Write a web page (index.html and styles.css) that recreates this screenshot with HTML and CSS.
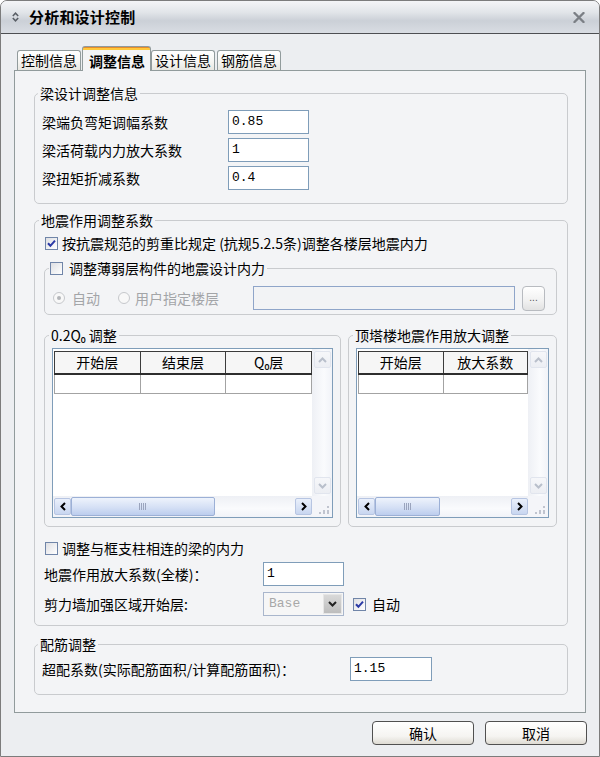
FILE: index.html
```html
<!DOCTYPE html>
<html lang="zh-CN">
<head>
<meta charset="utf-8">
<title>分析和设计控制</title>
<link rel="stylesheet" href="styles.css">
</head>
<body>
<div class="window">
  <header class="titlebar">
    <svg class="app-icon" width="7" height="10" viewBox="0 0 7 10"><path d="M0.8 4 L3.5 1.2 L6.2 4 M0.8 6 L3.5 8.8 L6.2 6" fill="none" stroke="#5a5f66" stroke-width="1.5"/></svg>
    <span class="title">分析和设计控制</span>
    <svg class="close" width="12" height="11" viewBox="0 0 12 11"><path d="M1.5 1 L10.5 10 M10.5 1 L1.5 10" stroke="#7b7f85" stroke-width="2.4" stroke-linecap="round"/></svg>
  </header>
  <main class="client">
    <nav class="tabs">
      <div class="tab t1">控制信息</div>
      <div class="tab active">调整信息</div>
      <div class="tab t3">设计信息</div>
      <div class="tab">钢筋信息</div>
    </nav>
    <section class="panel">
      <fieldset class="group g-beam">
        <legend>梁设计调整信息</legend>
        <div class="beam-grid">
          <span class="lbl">梁端负弯矩调幅系数</span><span class="input">0.85</span>
          <span class="lbl">梁活荷载内力放大系数</span><span class="input">1</span>
          <span class="lbl">梁扭矩折减系数</span><span class="input">0.4</span>
        </div>
      </fieldset>

      <fieldset class="group g-seismic">
        <legend>地震作用调整系数</legend>
        <div class="check-row">
          <span class="checkbox"><svg width="11" height="11" viewBox="0 0 11 11"><path d="M2 5.2 L4.4 7.8 L9 2.6" fill="none" stroke="#2b3aa6" stroke-width="2"/></svg></span>
          <span>按抗震规范的剪重比规定 (抗规5.2.5条)调整各楼层地震内力</span>
        </div>

        <fieldset class="group subgroup">
          <legend><span class="checkbox"></span><span>调整薄弱层构件的地震设计内力</span></legend>
          <div class="radio-row">
            <span class="radio on"></span><span class="dis">自动</span>
            <span class="radio r2"></span><span class="dis">用户指定楼层</span>
            <span class="input disabled wide"></span>
            <span class="dots-btn">...</span>
          </div>
        </fieldset>

        <div class="tables">
          <fieldset class="group tgroup tleft">
            <legend>0.2Q₀ 调整</legend>
            <div class="listview">
              <div class="lv-body">
                <table class="grid">
                  <thead><tr><th>开始层</th><th>结束层</th><th>Q₀层</th></tr></thead>
                  <tbody><tr><td></td><td></td><td></td></tr></tbody>
                </table>
              </div>
              <div class="vscroll">
                <span class="sb-btn dis"><svg width="9" height="6" viewBox="0 0 9 6"><path d="M1 5 L4.5 1.5 L8 5" fill="none" stroke="#b9bfcb" stroke-width="2"/></svg></span>
                <span class="sb-track"></span>
                <span class="sb-btn dis"><svg width="9" height="6" viewBox="0 0 9 6"><path d="M1 1 L4.5 4.5 L8 1" fill="none" stroke="#b9bfcb" stroke-width="2"/></svg></span>
              </div>
              <div class="hscroll">
                <span class="sb-btn"><svg width="6" height="9" viewBox="0 0 6 9"><path d="M5 1 L1.5 4.5 L5 8" fill="none" stroke="#000" stroke-width="2"/></svg></span>
                <span class="sb-thumb thumb-l"><svg width="8" height="7" viewBox="0 0 8 7"><path d="M0.5 0 V7 M2.5 0 V7 M4.5 0 V7 M6.5 0 V7" stroke="#9aa4bd" stroke-width="1"/></svg></span>
                <span class="sb-track"></span>
                <span class="sb-btn"><svg width="6" height="9" viewBox="0 0 6 9"><path d="M1 1 L4.5 4.5 L1 8" fill="none" stroke="#000" stroke-width="2"/></svg></span>
              </div>
              <div class="sizegrip"><svg width="10" height="10" viewBox="0 0 10 10"><path d="M8 2h2v2h-2zM4 6h2v2h-2zM8 6h2v2h-2zM0 8h2v2h-2zM4 8h2v2h-2zM8 8h2v2h-2z" fill="#c0c4cf"/></svg></div>
            </div>
          </fieldset>

          <fieldset class="group tgroup tright">
            <legend>顶塔楼地震作用放大调整</legend>
            <div class="listview">
              <div class="lv-body">
                <table class="grid">
                  <thead><tr><th>开始层</th><th>放大系数</th></tr></thead>
                  <tbody><tr><td></td><td></td></tr></tbody>
                </table>
              </div>
              <div class="vscroll">
                <span class="sb-btn dis"><svg width="9" height="6" viewBox="0 0 9 6"><path d="M1 5 L4.5 1.5 L8 5" fill="none" stroke="#b9bfcb" stroke-width="2"/></svg></span>
                <span class="sb-track"></span>
                <span class="sb-btn dis"><svg width="9" height="6" viewBox="0 0 9 6"><path d="M1 1 L4.5 4.5 L8 1" fill="none" stroke="#b9bfcb" stroke-width="2"/></svg></span>
              </div>
              <div class="hscroll">
                <span class="sb-btn"><svg width="6" height="9" viewBox="0 0 6 9"><path d="M5 1 L1.5 4.5 L5 8" fill="none" stroke="#000" stroke-width="2"/></svg></span>
                <span class="sb-thumb thumb-r"><svg width="8" height="7" viewBox="0 0 8 7"><path d="M0.5 0 V7 M2.5 0 V7 M4.5 0 V7 M6.5 0 V7" stroke="#9aa4bd" stroke-width="1"/></svg></span>
                <span class="sb-track"></span>
                <span class="sb-btn"><svg width="6" height="9" viewBox="0 0 6 9"><path d="M1 1 L4.5 4.5 L1 8" fill="none" stroke="#000" stroke-width="2"/></svg></span>
              </div>
              <div class="sizegrip"><svg width="10" height="10" viewBox="0 0 10 10"><path d="M8 2h2v2h-2zM4 6h2v2h-2zM8 6h2v2h-2zM0 8h2v2h-2zM4 8h2v2h-2zM8 8h2v2h-2z" fill="#c0c4cf"/></svg></div>
            </div>
          </fieldset>
        </div>

        <div class="check-row cr2">
          <span class="checkbox"></span>
          <span>调整与框支柱相连的梁的内力</span>
        </div>
        <div class="field-row fr1">
          <span class="lbl">地震作用放大系数(全楼)：</span>
          <span class="input">1</span>
        </div>
        <div class="field-row fr2">
          <span class="lbl">剪力墙加强区域开始层:</span>
          <span class="combo"><span class="combo-text">Base</span><span class="combo-btn"><svg width="9" height="6" viewBox="0 0 9 6"><path d="M1 1 L4.5 4.5 L8 1" fill="none" stroke="#222" stroke-width="2"/></svg></span></span>
          <span class="checkbox auto"><svg width="11" height="11" viewBox="0 0 11 11"><path d="M2 5.2 L4.4 7.8 L9 2.6" fill="none" stroke="#2b3aa6" stroke-width="2"/></svg></span>
          <span class="auto-lbl">自动</span>
        </div>
      </fieldset>

      <fieldset class="group g-rebar">
        <legend>配筋调整</legend>
        <div class="field-row fr3">
          <span class="lbl">超配系数(实际配筋面积/计算配筋面积)：</span>
          <span class="input">1.15</span>
        </div>
      </fieldset>
    </section>
    <footer class="buttons">
      <span class="btn">确认</span>
      <span class="btn">取消</span>
    </footer>
  </main>
</div>
</body>
</html>
```

FILE: styles.css
```css
* { box-sizing: border-box; }
html, body { margin: 0; padding: 0; }
body {
  width: 600px;
  height: 757px;
  font-family: "Noto Sans CJK SC", "Noto Sans", "DejaVu Sans", sans-serif;
  font-size: 14px;
  line-height: 16px;
  color: #000;
  background: #ffffff;
}

.window {
  width: 600px;
  height: 757px;
  border: 1px solid #7c7c7c;
  border-radius: 7px 7px 0 0;
  background: #eceef1;
  display: flex;
  flex-direction: column;
  overflow: hidden;
}

/* ---------- title bar ---------- */
.titlebar {
  flex: none;
  height: 33px;
  display: flex;
  align-items: center;
  padding: 0 14px 0 11px;
  background: linear-gradient(#f4f5f7 0%, #e2e5e9 35%, #cbd0d7 62%, #d9dde3 100%);
  border-bottom: 1px solid #4d4f52;
}
.app-icon { margin-right: 10px; }
.title {
  font-size: 15px;
  font-weight: bold;
  letter-spacing: 0.2px;
  color: #000;
}
.close { margin-left: auto; }

/* ---------- client ---------- */
.client {
  flex: 1;
  display: flex;
  flex-direction: column;
  padding: 12px 13px 0 13px;
}

.tabs {
  height: 25px;
  display: flex;
  align-items: flex-end;
  padding-left: 3px;
  margin-bottom: -1px;
  position: relative;
  z-index: 1;
}
.tab {
  height: 20px;
  margin-bottom: 1px;
  padding: 0 3px;
  border: 1px solid #919b9c;
  border-bottom: none;
  border-radius: 3px 3px 0 0;
  background: linear-gradient(#ffffff, #f6f6f3 55%, #e8e7e1);
  line-height: 19px;
  white-space: nowrap;
}
.tab.t1 { margin-right: 1px; }
.tab.t3 { margin-right: 2px; }
.tab.active {
  height: 25px;
  margin-bottom: 0;
  padding: 4px 5px 0 6px;
  line-height: 20px;
  font-weight: bold;
  border-radius: 3px 3px 0 0;
  background: linear-gradient(#e68b2c 0, #e68b2c 1px, #ffc83c 1px, #ffc83c 3px, #f3f4f6 3px);
}

.panel {
  flex: none;
  border: 1px solid #919b9c;
  background: #f3f4f6;
  padding: 14px 17px 17px 19px;
}

/* ---------- group boxes ---------- */
.group {
  margin: 0;
  min-width: 0;
  border: 1px solid #c9cbce;
  border-radius: 5px;
}
.group > legend {
  padding: 0 2px;
  height: 16px;
  line-height: 16px;
  white-space: nowrap;
}

.g-beam { padding: 9px 0 13px 7px; }
.g-beam > legend { margin-left: -4px; }

.beam-grid {
  display: grid;
  grid-template-columns: 186px 81px;
  grid-auto-rows: 24px;
  row-gap: 4px;
  align-items: center;
}

.g-seismic { margin-top: 8px; padding: 6px 10px 9px 9px; }
.g-seismic > legend { margin-left: -5px; }

.g-rebar { margin-top: 10px; padding: 5px 0 13px 7px; }
.g-rebar > legend { margin-left: -4px; }

/* ---------- controls ---------- */
.input {
  height: 24px;
  border: 1px solid #7f9db9;
  background: #ffffff;
  font-family: "Liberation Mono", "DejaVu Sans Mono", monospace;
  font-size: 13px;
  padding: 0 3px;
  display: flex;
  align-items: center;
}
.input.disabled {
  background: #f2f3f5;
  border-color: #8fa5c9;
}
.input.wide { width: 262px; margin-left: auto; }

.checkbox {
  flex: none;
  width: 13px;
  height: 13px;
  border: 1px solid #7085a8;
  background: linear-gradient(135deg, #dedfe3, #ffffff);
  display: flex;
  align-items: center;
  justify-content: center;
}

.check-row {
  display: flex;
  align-items: center;
  gap: 4px;
  height: 18px;
  margin-left: 1px;
}
.check-row.cr2 { margin-top: 12px; }

.subgroup { margin-top: 7px; padding: 9px 11px 4px 8px; }
.subgroup > legend {
  display: flex;
  align-items: center;
  gap: 6px;
  height: 18px;
  line-height: 18px;
  padding: 0 2px 0 1px;
  margin-left: -4px;
}

.radio-row {
  display: flex;
  align-items: center;
  height: 24px;
}
.radio {
  flex: none;
  width: 12px;
  height: 12px;
  border-radius: 50%;
  border: 1px solid #c6c8cc;
  background: #f8f8f8;
  margin-right: 7px;
  display: flex;
  align-items: center;
  justify-content: center;
}
.radio.on::after {
  content: "";
  width: 4px;
  height: 4px;
  border-radius: 50%;
  background: #b3b5b9;
}
.radio.r2 { margin-left: 18px; margin-right: 5px; }
.dis { color: #a3a5a8; }

.dots-btn {
  flex: none;
  width: 23px;
  height: 25px;
  margin-left: 7px;
  border: 1px solid #b8bbc0;
  border-radius: 4px;
  background: linear-gradient(#ffffff, #f1f1f1 60%, #e2e2e2);
  font-family: "Liberation Sans", sans-serif;
  font-size: 10px;
  line-height: 10px;
  color: #555;
  display: flex;
  align-items: flex-end;
  justify-content: center;
  padding-bottom: 7px;
}

/* ---------- tables ---------- */
.tables {
  display: flex;
  gap: 7px;
  margin-top: 12px;
}
.tgroup { padding: 5px 7px 8px 7px; }
.tgroup > legend { margin-left: -3px; }
.tleft { width: 297px; flex: none; }
.tright { flex: 1; }

.listview {
  height: 170px;
  border: 1px solid #7f9db9;
  background: #ffffff;
  display: grid;
  grid-template-columns: 1fr 20px;
  grid-template-rows: 1fr 21px;
}
.lv-body { padding: 2px 0 0 1px; overflow: hidden; }
.grid {
  width: 100%;
  border-collapse: collapse;
  table-layout: fixed;
}
.grid th {
  height: 22px;
  padding: 0;
  font-weight: normal;
  text-align: center;
  line-height: 19px;
  background: #f6f6f6;
  border: 1px solid #3c3c3c;
  border-bottom: 2px solid #2e2e2e;
}
.grid td {
  height: 20px;
  padding: 0;
  border: 1px solid #a3a3a3;
  border-top: none;
}

.vscroll {
  display: flex;
  flex-direction: column;
  padding: 2px 1px 2px 2px;
  background: linear-gradient(to right, #eef0f5, #fafbfd 60%, #f1f3f8);
}
.hscroll {
  display: flex;
  padding: 1px 0 1px 1px;
  background: linear-gradient(#eef0f5, #fafbfd 60%, #f1f3f8);
}
.sb-track { flex: 1; }
.sb-btn {
  flex: none;
  width: 17px;
  height: 17px;
  margin-top: 1px;
  border: 1px solid #b7c5e2;
  border-radius: 2px;
  background: linear-gradient(#eaf0fb, #c8d6f0);
  display: flex;
  align-items: center;
  justify-content: center;
}
.vscroll .sb-btn { margin-top: 0; }
.sb-btn.dis {
  border-color: #e1e5ee;
  background: linear-gradient(#f6f7fa, #eceef3);
}
.sb-thumb {
  flex: none;
  height: 19px;
  border: 1px solid #9cb0d6;
  border-radius: 2px;
  background: linear-gradient(#eef3fc, #d5e0f5 55%, #bccdee);
  display: flex;
  align-items: center;
  justify-content: center;
}
.thumb-l { width: 144px; }
.thumb-r { width: 65px; }
.sizegrip {
  background: #f4f5f9;
  display: flex;
  align-items: flex-end;
  justify-content: flex-end;
  padding: 0 3px 3px 0;
}

/* ---------- bottom rows ---------- */
.field-row {
  display: flex;
  align-items: center;
  height: 24px;
}
.fr1 { margin-top: 5px; }
.fr2 { margin-top: 6px; }
.fr1 .lbl, .fr2 .lbl { width: 219px; flex: none; }
.fr1 .input { width: 81px; }
.fr3 .lbl { width: 308px; flex: none; }
.fr3 .input { width: 82px; }

.combo {
  width: 81px;
  height: 24px;
  border: 1px solid #a9b6cc;
  background: #f6f6f6;
  display: flex;
  align-items: center;
  padding: 1px;
}
.combo-text {
  flex: 1;
  padding-left: 4px;
  font-family: "Liberation Mono", "DejaVu Sans Mono", monospace;
  font-size: 13px;
  color: #a8a8a8;
}
.combo-btn {
  width: 19px;
  height: 20px;
  background: linear-gradient(#d9d9d9, #bdbdbd);
  border: 1px solid #e6e6e6;
  display: flex;
  align-items: center;
  justify-content: center;
}
.checkbox.auto { margin-left: 9px; }
.auto-lbl { margin-left: 6px; }

/* ---------- dialog buttons ---------- */
.buttons {
  display: flex;
  justify-content: flex-end;
  gap: 11px;
  margin-top: 8px;
  margin-right: -1px;
}
.btn {
  width: 102px;
  height: 24px;
  border: 1px solid #505050;
  border-radius: 4px;
  background: linear-gradient(#ffffff, #f5f4f1 65%, #dedbd3);
  display: flex;
  align-items: center;
  justify-content: center;
}
```
